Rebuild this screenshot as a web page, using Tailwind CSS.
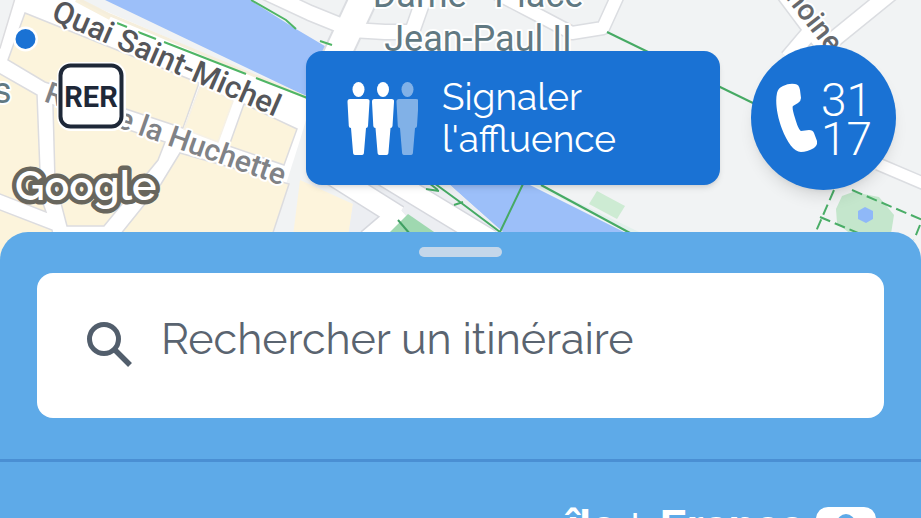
<!DOCTYPE html>
<html lang="fr">

<head>
    <meta charset="UTF-8">
    <meta name="viewport" content="width=device-width, initial-scale=1.0">
    <title>Itinéraires</title>
    <script src="https://cdn.jsdelivr.net/npm/@tailwindcss/browser@4"></script>
</head>

<body class="bg-[#5eaae8] font-['Raleway','Lato',sans-serif]">
    <main class="relative flex h-screen w-full flex-col overflow-hidden">

        <!-- map -->
        <svg class="absolute inset-x-0 top-0 h-[260px] w-full bg-[#f1f3f4]" viewBox="0 0 921 260" preserveAspectRatio="xMidYMin slice" role="img" aria-label="Plan du quartier Saint-Michel">
            <!-- left bank -->
            <path d="M0 0H80L312 100L300 140L262 260H0Z" fill="#fff" />
            <path d="M300 180L353 204L345 260H290Z" fill="#fdf4dc" />
            <g fill="#fcf4dc" stroke="#dcdcdf" stroke-width="1.5">
                <path d="M25 13L199 83L183 128L45 82L8 60Z" />
                <path d="M201 84L233 101L218 142L184 129Z" stroke="#f6f1e6" />
                <path d="M244 104L297 129L284 165L229 146Z" />
                <path d="M-5 71L37 95L41 198L46 212L-5 192Z" />
                <path d="M53 105L165 142L158 160L104 226H67L55 180Z" />
                <path d="M180 153L289 184L264 260H100L128 225L161 184Z" />
                <path d="M-5 208L52 230L58 260H-5Z" />
                <path d="M-5 -5H16L0 48H-5Z" fill="#f1f3f4" />
            </g>
            <path d="M76 0L110 18" stroke="#f8f0dc" stroke-width="4" />
            <path d="M105 0H250L296 29L340 55L530 185L640 240H512L450 185L310 98Z" fill="#9cbff9" />
            <path d="M80 0L110 15L310 99" fill="none" stroke="#f5eedc" stroke-width="3" />
            <path d="M117 23L127 27M138 32L156 39M164 42L246 74M256 78L310 99" stroke="#4fb565" stroke-width="2" />
            <path d="M251 0L286 20L296 29" fill="none" stroke="#4fb565" stroke-width="2" />

            <!-- island roads -->
            <g fill="none" stroke="#dbdde1" stroke-linejoin="round">
                <path d="M265 -8L310 13L352 30L385 32H412L425 -5" stroke-width="17" />
                <path d="M490 -10L536 14L572 33L603 28L618 -5" stroke-width="15" />
                <path d="M365 -5L330 70" stroke-width="30" />
                <path d="M780 -12L834 60M892 -8L828 44M810 32L788 58" stroke-width="18" />
                <path d="M878 164L925 184" stroke-width="14" />
            </g>
            <g fill="none" stroke="#fff" stroke-linejoin="round">
                <path d="M265 -8L310 13L352 30L385 32H412L425 -5" stroke-width="14" />
                <path d="M490 -10L536 14L572 33L603 28L618 -5" stroke-width="12" />
                <path d="M365 -5L330 70" stroke-width="26" />
                <path d="M780 -12L834 60M892 -8L828 44M810 32L788 58" stroke-width="15" />
                <path d="M878 164L925 184" stroke-width="11" />
            </g>
            <path d="M320 41L332 45" stroke="#4fb565" stroke-width="2" />
            <path d="M340 180L450 185L516 245H430L405 222L370 250H346L353 204Z" fill="#eceef2" />
            <g fill="none">
                <path d="M328 172L398 216M378 172L490 240M402 211L368 240" stroke="#d6d8de" stroke-width="23" />
                <path d="M328 172L398 216M378 172L490 240M402 211L368 240" stroke="#fff" stroke-width="20" />
            </g>
            <path d="M408 214L437 234H388Z" fill="#9fd8b0" />
            <path d="M398 220L410 234" stroke="#3f9f63" stroke-width="2" />
            <path d="M525 179L645 237" stroke="#e3f0ec" stroke-width="4" />
            <g fill="none" stroke="#46aa64" stroke-width="2">
                <path d="M425 180L438 190M426 189L439 191M434 183L460 202L500 232L523 184M454 205L463 202" />
                <path d="M541 185L630 233" />
                <path d="M607 32L755 104" />
            </g>
            <path d="M597 191L625 206L617 219L589 204Z" fill="#cdebd3" />

            <!-- garden -->
            <path d="M842 196L853 192L879 197L894 215L890 240H858L837 223L836 209Z" fill="#c4e6cc" />
            <path d="M865 207L873 211V219L866 223L858 219V211Z" fill="#8fb8f8" />
            <path d="M834 190L814 236M852 190L925 221M820 217L858 233M920 225L914 240" fill="none" stroke="#4aad67" stroke-width="2" stroke-dasharray="11 5" />

            <!-- labels -->
            <g class="font-['Roboto',sans-serif]" stroke="#fff" stroke-width="4" stroke-linejoin="round" paint-order="stroke">
                <text transform="translate(50 19) rotate(23.5)" font-size="31" font-weight="500" fill="#55565a">Quai Saint-Michel</text>
                <text transform="translate(43 101) rotate(19.5)" font-size="30" font-weight="500" fill="#808286">Rue de la Huchette</text>
                <text x="478" y="7" text-anchor="middle" font-size="36" fill="#617982">Dame - Place</text>
                <text x="478" y="51" text-anchor="middle" font-size="36" fill="#617982">Jean-Paul II</text>
                <text transform="translate(829 54) rotate(52)" text-anchor="end" font-size="29" font-weight="500" fill="#66686c">Chanoine</text>
                <text x="-7" y="103" font-size="36" fill="#617982">s</text>
            </g>

            <!-- stations -->
            <circle cx="25.500" cy="39" r="12.500" fill="#fff" />
            <circle cx="25.500" cy="39" r="10" fill="#1a72d4" />
            <rect x="57" y="62" width="69" height="69" rx="14" fill="#fff" />
            <rect x="60.500" y="65.500" width="61" height="61" rx="10" fill="#fff" stroke="#1e2838" stroke-width="4" />
            <text class="font-['Roboto',sans-serif]" x="91" y="107" text-anchor="middle" font-size="29" font-weight="700" fill="#1e2838">RER</text>
            <text class="font-['Raleway','Lato',sans-serif]" x="15" y="200" font-size="41" font-weight="600" fill="#fff" stroke="#68665d" stroke-width="9" stroke-linejoin="round" paint-order="stroke">Google</text>
        </svg>

        <!-- floating actions -->
        <div class="relative flex items-center justify-end gap-[31px] pt-[45px] pr-[25px] pb-[42px]">
            <button class="flex h-[134px] w-[414px] items-center gap-6 rounded-2xl bg-[#1a72d4] pl-10 text-left text-[37px] leading-[42px] text-white shadow-md">
                <svg class="h-[76px] w-[72px] shrink-0" viewBox="0 0 72 76" fill="#fff" aria-hidden="true">
                    <g id="person">
                        <ellipse cx="12.500" cy="9.500" rx="6" ry="7.500" />
                        <path d="M4 19H21Q24 19 23.500 22L22 46Q21.800 48 20 48L18 72Q18 75 16 75H9Q7 75 7 72L5 48Q3 48 2.800 46L1.500 22Q1.300 19 4 19Z" />
                    </g>
                    <use href="#person" x="24.500" />
                    <use href="#person" x="49" opacity=".45" />
                </svg>
                <span>Signaler<br>l'affluence</span>
            </button>
            <button class="flex size-[145px] items-center justify-center gap-1 rounded-full bg-[#1a72d4] font-['Roboto',sans-serif] text-[46px] leading-[39px] font-light text-white shadow-lg">
                <svg class="h-[70px] w-[42px] shrink-0" viewBox="0 0 42 70" fill="#fff" aria-hidden="true">
                    <path d="M8 3Q14 0 20 1Q24 1 25 7L26 15Q26 18 23 20L18 23C17 24 18 29 20 35C22 42 24 47 26 48L34 47Q38 47 39 50L42 58Q43 62 39 65Q32 69 26 69C19 69 12 59 7 46C2 33 0 19 2 10Q3 5 8 3Z" />
                </svg>
                <span class="pt-1">31<br>17</span>
            </button>
        </div>

        <!-- bottom sheet -->
        <section class="relative flex flex-1 flex-col rounded-t-[28px] bg-[#5eaae8] pt-[15px]">
            <div class="mx-auto h-[10px] w-[83px] rounded-full bg-[#c4d7ea]"></div>
            <form class="mx-[37px] mt-4 flex h-[145px] shrink-0 items-center gap-7 rounded-2xl bg-white px-12 pb-1">
                <svg class="size-12 shrink-0" viewBox="0 0 48 48" fill="none" stroke="#525e6c" aria-hidden="true">
                    <circle cx="19" cy="19" r="14.500" stroke-width="5" />
                    <path d="M30 30L45 45" stroke-width="5.500" />
                </svg>
                <input type="text" aria-label="Rechercher un itinéraire" placeholder="Rechercher un itinéraire" class="min-w-0 flex-1 pb-2 text-[43px] text-[#525e6c] outline-none placeholder:text-[#5a6470]">
            </form>
            <div class="mt-[41px] h-[3px] shrink-0 bg-[#4a8fd3]"></div>
            <div class="mt-[41px] flex h-14 shrink-0 items-start justify-end gap-3 pr-[45px] font-['Liberation_Sans',sans-serif] font-bold text-white">
                <p class="flex items-start gap-2 text-[44px] leading-[46px]"><span>île</span><span class="pt-2 text-2xl leading-6">de</span><span>France</span></p>
                <svg class="mt-1 h-[52px] w-[60px]" viewBox="0 0 60 52" aria-hidden="true">
                    <rect width="60" height="52" rx="12" fill="#fff" />
                    <circle cx="30" cy="16" r="9" fill="#5eaae8" />
                </svg>
            </div>
        </section>
    </main>
</body>

</html>
